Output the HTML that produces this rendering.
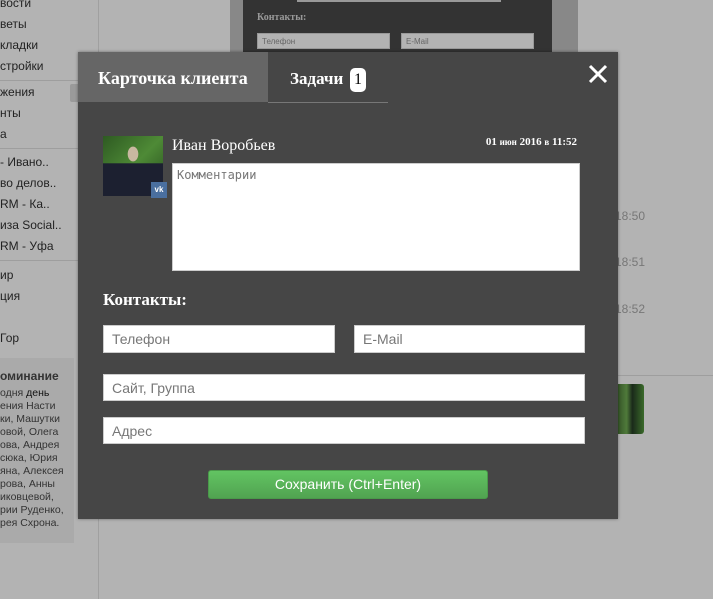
<!DOCTYPE html>
<html><head><meta charset="utf-8"><style>
*{margin:0;padding:0;box-sizing:border-box}
body{width:713px;height:599px;overflow:hidden;background:#b3b3b3;position:relative;font-family:"Liberation Sans",sans-serif}
.a{position:absolute}
.side{font-size:12px;color:#222;line-height:21px}
.srf{font-family:"Liberation Serif",serif}
.inp{position:absolute;background:#fff;border:1px solid #ccc;font-size:14px;color:#777;padding-left:8px;display:flex;align-items:center}
</style></head><body>
<div class="a" style="left:98px;top:0;width:1px;height:599px;background:#a0a0a0"></div>
<div class="a side" style="left:0;top:-7px">
<div>вости</div><div>веты</div><div>кладки</div><div>стройки</div>
</div>
<div class="a" style="left:0;top:80px;width:98px;height:1px;background:#9e9e9e"></div>
<div class="a" style="left:70px;top:84px;width:10px;height:18px;background:#9a9a9a;border-radius:2px"></div>
<div class="a side" style="left:0;top:82px"><div>жения</div><div>нты</div><div>а</div></div>
<div class="a" style="left:0;top:148px;width:98px;height:1px;background:#9e9e9e"></div>
<div class="a side" style="left:0;top:152px"><div>- Ивано..</div><div>во делов..</div><div>RM - Ка..</div><div>иза Social..</div><div>RM - Уфа</div></div>
<div class="a" style="left:0;top:260px;width:98px;height:1px;background:#9e9e9e"></div>
<div class="a side" style="left:0;top:265px"><div>ир</div><div>ция</div></div>
<div class="a side" style="left:0;top:328px">Гор</div>
<div class="a" style="left:0;top:358px;width:74px;height:185px;background:#aaa"></div>
<div class="a" style="left:0;top:369px;font-size:12px;font-weight:bold;color:#333">оминание</div>
<div class="a" style="left:0;top:387px;font-size:10.5px;line-height:13px;color:#333">одня <b style="font-weight:normal;color:#111">день</b><br>ения Насти<br>ки, Машутки<br>овой, Олега<br>ова, Андрея<br>сюка, Юрия<br>яна, Алексея<br>рова, Анны<br>иковцевой,<br>рии Руденко,<br>рея Схрона.</div>
<div class="a" style="left:230px;top:0;width:348px;height:60px;background:#888"></div>
<div class="a" style="left:243px;top:0;width:309px;height:60px;background:#333"></div>
<div class="a" style="left:297px;top:0;width:204px;height:2px;background:#999"></div>
<div class="a srf" style="left:257px;top:12px;font-size:10px;font-weight:bold;color:#999">Контакты:</div>
<div class="a" style="left:257px;top:33px;width:133px;height:16px;background:#b3b3b3;border:1px solid #999;font-size:8px;color:#666;padding:3px 4px">Телефон</div>
<div class="a" style="left:401px;top:33px;width:133px;height:16px;background:#b3b3b3;border:1px solid #999;font-size:8px;color:#666;padding:3px 4px">E-Mail</div>
<div class="a" style="left:615px;top:208px;font-size:12px;color:#777;line-height:16px">18:50</div>
<div class="a" style="left:615px;top:255px;font-size:12px;color:#777">18:51</div>
<div class="a" style="left:615px;top:302px;font-size:12px;color:#777">18:52</div>
<div class="a" style="left:618px;top:375px;width:95px;height:1px;background:#9e9e9e"></div>
<div class="a" style="left:615px;top:384px;width:29px;height:50px;border-radius:3px;background:linear-gradient(90deg,#2d4a22,#4f7a3a 40%,#1a2a1a 60%,#3a6a2a)"></div>
<div class="a" style="left:78px;top:52px;width:540px;height:467px;background:#464646;box-shadow:0 0 3px rgba(0,0,0,.4)">
<div class="a srf" style="left:0;top:0;width:190px;height:50px;background:#666;color:#fff;font-weight:bold;font-size:18px;padding:16px 0 0 20px">Карточка клиента</div>
<div class="a srf" style="left:212px;top:17px;color:#fff;font-weight:bold;font-size:17px">Задачи</div>
<div class="a srf" style="left:272px;top:16px;width:16px;height:24px;background:#fff;border-radius:5px;color:#000;font-size:16px;text-align:center;line-height:24px">1</div>
<div class="a" style="left:190px;top:50px;width:120px;height:1px;background:#777"></div>
<svg class="a" style="left:510px;top:12px" width="20" height="20" viewBox="0 0 20 20"><path d="M2 2L18 18M18 2L2 18" stroke="#fff" stroke-width="3"/></svg>
<div class="a" style="left:25px;top:84px;width:60px;height:60px;background:radial-gradient(ellipse at 50% 30%,#c9b8a0 0 12%,transparent 13%),linear-gradient(180deg,transparent 45%,#1c2030 46%),linear-gradient(135deg,#2e5a22,#4e8a36 50%,#244a1c)"></div>
<div class="a" style="left:73px;top:130px;width:16px;height:16px;background:#4a6f9f;color:#fff;font-size:8px;font-weight:bold;text-align:center;line-height:16px">vk</div>
<div class="a srf" style="left:94px;top:85px;color:#fff;font-size:16px">Иван Воробьев</div>
<div class="a srf" style="right:41px;top:84px;color:#fff;font-size:11px;font-weight:bold">01 <span style="font-size:9px">июн</span> 2016 <span style="font-size:9px">в</span> 11:52</div>
<div class="a" style="left:94px;top:111px;width:408px;height:108px;background:#fff;border:1px solid #ccc;font-family:'DejaVu Sans Mono','Liberation Mono',monospace;font-size:12px;color:#777;padding:4px 4px">Комментарии</div>
<div class="a srf" style="left:25px;top:238px;color:#fff;font-size:17px;font-weight:bold">Контакты:</div>
<div class="inp" style="left:25px;top:273px;width:232px;height:28px">Телефон</div>
<div class="inp" style="left:276px;top:273px;width:231px;height:28px">E-Mail</div>
<div class="inp" style="left:25px;top:322px;width:482px;height:27px">Сайт, Группа</div>
<div class="inp" style="left:25px;top:365px;width:482px;height:27px">Адрес</div>
<div class="a" style="left:130px;top:418px;width:280px;height:29px;background:linear-gradient(#62c462,#51a351);border:1px solid #4a9a4a;border-radius:3px;color:#fff;font-size:14px;text-align:center;line-height:27px">Сохранить (Ctrl+Enter)</div>
</div>
</body></html>
